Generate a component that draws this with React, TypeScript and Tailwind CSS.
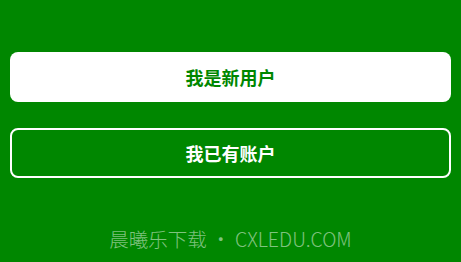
export default function App() {
  return (
    <div
      className="w-[461px] h-[262px] bg-[#008700] flex flex-col px-[10px] pt-[52px]"
      style={{ fontFamily: '"Noto Sans CJK SC", "Liberation Sans", sans-serif' }}
    >
      <button className="h-[50px] w-full rounded-[8px] bg-white text-[#008700] text-[18px] font-bold">
        我是新用户
      </button>
      <button className="mt-[26px] h-[50px] w-full rounded-[8px] border-2 border-white text-white text-[18px] font-bold">
        我已有账户
      </button>
      <div className="mt-auto mb-[9px] text-center text-[19.5px] font-light text-white/50">
        晨曦乐下载 • CXLEDU.COM
      </div>
    </div>
  );
}
